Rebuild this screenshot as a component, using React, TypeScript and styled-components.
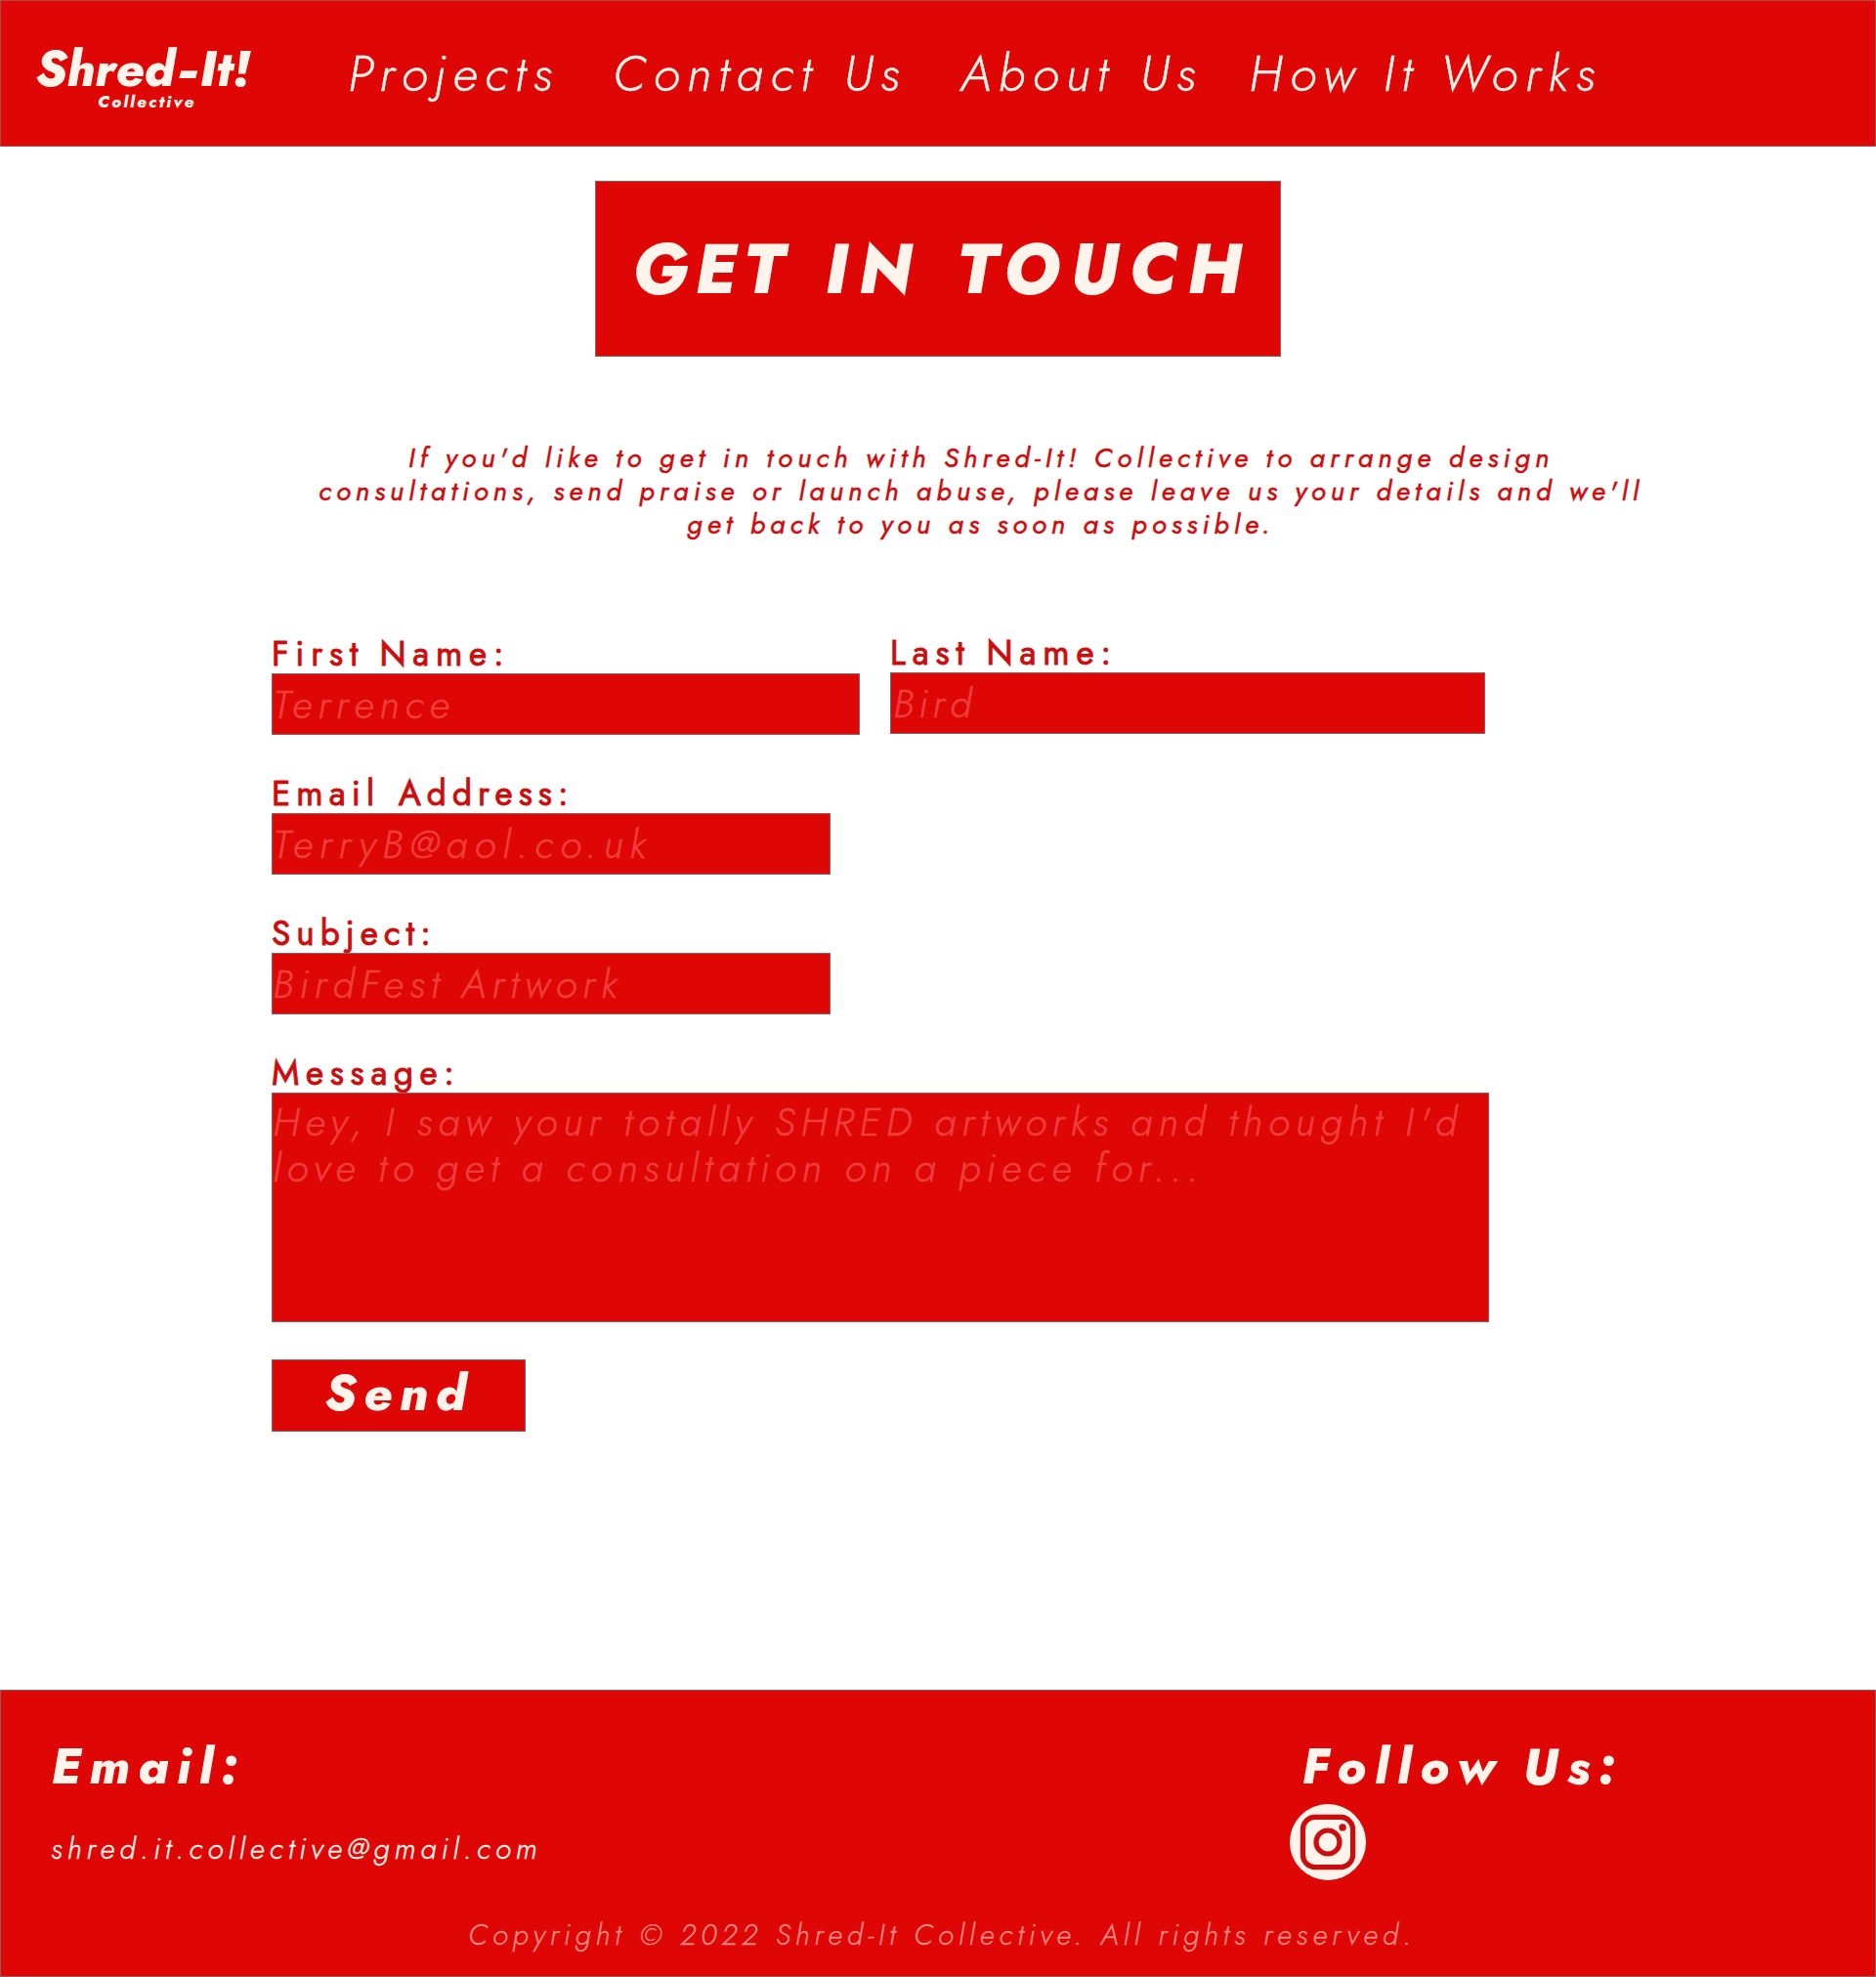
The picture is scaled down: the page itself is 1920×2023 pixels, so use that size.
import React from 'react';
import styled, { createGlobalStyle } from 'styled-components';

const red = '#de0705';
const ink = '#cc0d0e';
const cream = '#fff4ec';
const edge = '#8e5f5f';
const faded = '#ee3f3d';

const GlobalStyle = createGlobalStyle`
  *, *::before, *::after { box-sizing: border-box; }
  body { margin: 0; background: #fff; }
  body, input, textarea, button { font-family: Jost, Lato, sans-serif; }
`;

interface Tracked {
  $tracking: number;
  $words?: number;
}

const Page = styled.div`
  display: flex;
  flex-direction: column;
  width: 1920px;
  height: 2023px;
`;

const Header = styled.header`
  display: flex;
  align-items: center;
  height: 150px;
  padding-bottom: 1px;
  background: ${red};
  box-shadow: inset 0 0 0 1px #ac4847;
  color: ${cream};
`;

const Logo = styled.a`
  display: flex;
  flex-direction: column;
  align-self: flex-start;
  width: 356px;
  padding: 46px 0 0 36px;
  font-style: italic;
  font-weight: 800;
  white-space: nowrap;
`;

const LogoName = styled.span`
  font-size: 51px;
  line-height: 48px;
  letter-spacing: 0.1px;
`;

const LogoHyphen = styled.span`
  display: inline-block;
  margin: 0 7px 0 7px;
  transform: scaleX(1.55);
`;

const LogoTag = styled.span`
  padding-left: 64px;
  font-size: 17px;
  line-height: 20px;
  letter-spacing: 2.28px;
`;

const Nav = styled.nav`
  display: grid;
  grid-template-columns: 271px 356px 295px auto;
`;

const NavLink = styled.a<Tracked>`
  font-size: 51px;
  font-style: italic;
  font-weight: 300;
  line-height: 60px;
  letter-spacing: ${(p) => p.$tracking}px;
  word-spacing: ${(p) => p.$words ?? 0}px;
  white-space: nowrap;
  -webkit-text-stroke: 0.4px currentColor;
`;

const Main = styled.main`
  display: flex;
  flex: 1;
  flex-direction: column;
`;

const Title = styled.h1`
  align-self: center;
  width: 702px;
  height: 180px;
  margin: 35px 0 0;
  padding-left: 38px;
  background: ${red};
  box-shadow: inset 0 0 0 1px ${edge};
  color: ${cream};
  font-size: 71px;
  font-style: italic;
  font-weight: 800;
  line-height: 182px;
  word-spacing: 3.3px;
  white-space: nowrap;
`;

const TitleWord = styled.span<Tracked>`
  margin-right: 4px;
  letter-spacing: ${(p) => p.$tracking}px;
`;

const Intro = styled.p`
  width: 1400px;
  margin: 87px 0 0 304px;
  color: ${ink};
  font-size: 28px;
  font-style: italic;
  font-weight: 400;
  line-height: 34px;
  text-align: center;
  -webkit-text-stroke: 0.5px currentColor;
`;

const IntroLine = styled.span<Tracked>`
  display: block;
  letter-spacing: ${(p) => p.$tracking}px;
  white-space: nowrap;
`;

const Form = styled.form`
  display: flex;
  flex-direction: column;
  align-items: flex-start;
  gap: 40px;
  margin: 95px 0 0 278px;
`;

const FieldRow = styled.div`
  display: flex;
  gap: 31px;
`;

const Field = styled.label<{ $width: number; $raised?: boolean }>`
  display: flex;
  flex-direction: column;
  width: ${(p) => p.$width}px;
  margin-top: ${(p) => (p.$raised ? -1 : 0)}px;
`;

const FieldLabel = styled.span<Tracked>`
  height: 40px;
  color: ${ink};
  font-size: 35px;
  font-weight: 400;
  line-height: 40px;
  letter-spacing: ${(p) => p.$tracking}px;
  word-spacing: ${(p) => p.$words ?? 0}px;
  white-space: nowrap;
  -webkit-text-stroke: 0.9px currentColor;
`;

const Input = styled.input<Tracked & { $indent?: number }>`
  width: 100%;
  height: 63px;
  padding: 0 0 0 ${(p) => p.$indent ?? 1}px;
  border: 0;
  border-radius: 0;
  outline: 0;
  background: ${red};
  box-shadow: inset 0 0 0 1px ${edge};
  color: ${cream};
  font-size: 41px;
  font-style: italic;
  font-weight: 300;
  letter-spacing: ${(p) => p.$tracking}px;
  word-spacing: ${(p) => p.$words ?? 0}px;

  &::placeholder {
    color: ${faded};
    opacity: 1;
    -webkit-text-stroke: 0.5px ${faded};
  }
`;

const TextArea = styled.textarea`
  width: 100%;
  height: 235px;
  padding: 6px 0 0 1px;
  border: 0;
  border-radius: 0;
  outline: 0;
  overflow: hidden;
  resize: none;
  background: ${red};
  box-shadow: inset 0 0 0 1px ${edge};
  color: ${cream};
  font-size: 41px;
  font-style: italic;
  font-weight: 300;
  line-height: 47px;
  letter-spacing: 5.9px;
  word-spacing: -0.7px;

  &::placeholder {
    color: ${faded};
    opacity: 1;
    -webkit-text-stroke: 0.5px ${faded};
  }
`;

const SendButton = styled.button`
  display: flex;
  align-items: center;
  width: 260px;
  height: 74px;
  margin-top: -2px;
  padding: 0 0 6px 54px;
  border: 0;
  background: ${red};
  box-shadow: inset 0 0 0 1px ${edge};
  color: ${cream};
  font-size: 51px;
  font-style: italic;
  font-weight: 800;
  letter-spacing: 7.67px;
`;

const Footer = styled.footer`
  display: flex;
  flex-direction: column;
  justify-content: space-between;
  height: 294px;
  padding: 48px 0 23px;
  background: ${red};
  box-shadow: inset 0 0 0 1px ${edge};
  color: ${cream};
`;

const FooterColumns = styled.div`
  display: grid;
  grid-template-columns: 1320px 1fr;
`;

const ContactColumn = styled.section`
  display: flex;
  flex-direction: column;
  gap: 35px;
  padding-left: 52px;
`;

const SocialColumn = styled.section`
  display: flex;
  flex-direction: column;
  align-items: flex-start;
  gap: 9px;
`;

const FooterHeading = styled.h2<Tracked & { $indent?: number }>`
  margin: 0;
  padding-left: ${(p) => p.$indent ?? 0}px;
  font-size: 51px;
  font-style: italic;
  font-weight: 800;
  line-height: 60px;
  letter-spacing: ${(p) => p.$tracking}px;
  word-spacing: ${(p) => p.$words ?? 0}px;
  white-space: nowrap;
`;

const EmailLink = styled.a`
  font-size: 30px;
  font-style: italic;
  font-weight: 300;
  line-height: 40px;
  letter-spacing: 5px;
  -webkit-text-stroke: 0.4px currentColor;
`;

const InstagramIcon = styled.svg`
  display: block;
  width: 79px;
  height: 79px;
`;

const Copyright = styled.p`
  margin: 0;
  padding-left: 479px;
  color: #f68983;
  font-size: 30px;
  font-style: italic;
  font-weight: 300;
  line-height: 40px;
  letter-spacing: 4.81px;
  -webkit-text-stroke: 0.3px currentColor;
`;

export default function App() {
  return (
    <Page>
      <GlobalStyle />
      <Header>
        <Logo>
          <LogoName>
            Shred<LogoHyphen>-</LogoHyphen>It!
          </LogoName>
          <LogoTag>Collective</LogoTag>
        </Logo>
        <Nav>
          <NavLink $tracking={7.21}>Projects</NavLink>
          <NavLink $tracking={7.3} $words={3}>Contact Us</NavLink>
          <NavLink $tracking={7.03} $words={3.67}>About Us</NavLink>
          <NavLink $tracking={7.65} $words={-1.5}>How It Works</NavLink>
        </Nav>
      </Header>

      <Main>
        <Title>
          <TitleWord $tracking={7}>GET </TitleWord>
          <TitleWord $tracking={10.65}>IN TOUCH</TitleWord>
        </Title>
        <Intro>
          <IntroLine $tracking={5.05}>
            If you'd like to get in touch with Shred-It! Collective to arrange design
          </IntroLine>
          <IntroLine $tracking={4.96}>
            consultations, send praise or launch abuse, please leave us your details and we'll
          </IntroLine>
          <IntroLine $tracking={4.97}>get back to you as soon as possible.</IntroLine>
        </Intro>

        <Form>
          <FieldRow>
            <Field $width={602}>
              <FieldLabel $tracking={6.8} $words={-2}>First Name:</FieldLabel>
              <Input $tracking={5.88} placeholder="Terrence" />
            </Field>
            <Field $width={609} $raised>
              <FieldLabel $tracking={6.97} $words={-2}>Last Name:</FieldLabel>
              <Input $tracking={4.92} $indent={3} placeholder="Bird" />
            </Field>
          </FieldRow>
          <Field $width={572}>
            <FieldLabel $tracking={6.1} $words={2}>Email Address:</FieldLabel>
            <Input $tracking={6.72} placeholder="TerryB@aol.co.uk" />
          </Field>
          <Field $width={572}>
            <FieldLabel $tracking={6.13}>Subject:</FieldLabel>
            <Input $tracking={5.99} $words={-1.94} placeholder="BirdFest Artwork" />
          </Field>
          <Field $width={1246}>
            <FieldLabel $tracking={6.7}>Message:</FieldLabel>
            <TextArea placeholder="Hey, I saw your totally SHRED artworks and thought I'd love to get a consultation on a piece for..." />
          </Field>
          <SendButton type="button">Send</SendButton>
        </Form>
      </Main>

      <Footer>
        <FooterColumns>
          <ContactColumn>
            <FooterHeading $tracking={8.61}>Email:</FooterHeading>
            <EmailLink>shred.it.collective@gmail.com</EmailLink>
          </ContactColumn>
          <SocialColumn>
            <FooterHeading $tracking={9.09} $words={-4.79} $indent={12}>
              Follow Us:
            </FooterHeading>
            <InstagramIcon viewBox="0 0 79 79" fill="none">
              <circle cx="39" cy="39" r="39" fill={cream} />
              <rect x="13.4" y="13.4" width="51.2" height="51.2" rx="12.5" stroke={ink} strokeWidth="5.2" />
              <circle cx="39" cy="39" r="12" stroke={ink} strokeWidth="5.2" />
              <circle cx="54.1" cy="23.9" r="3.7" fill={ink} />
            </InstagramIcon>
          </SocialColumn>
        </FooterColumns>
        <Copyright>Copyright © 2022 Shred-It Collective. All rights reserved.</Copyright>
      </Footer>
    </Page>
  );
}
